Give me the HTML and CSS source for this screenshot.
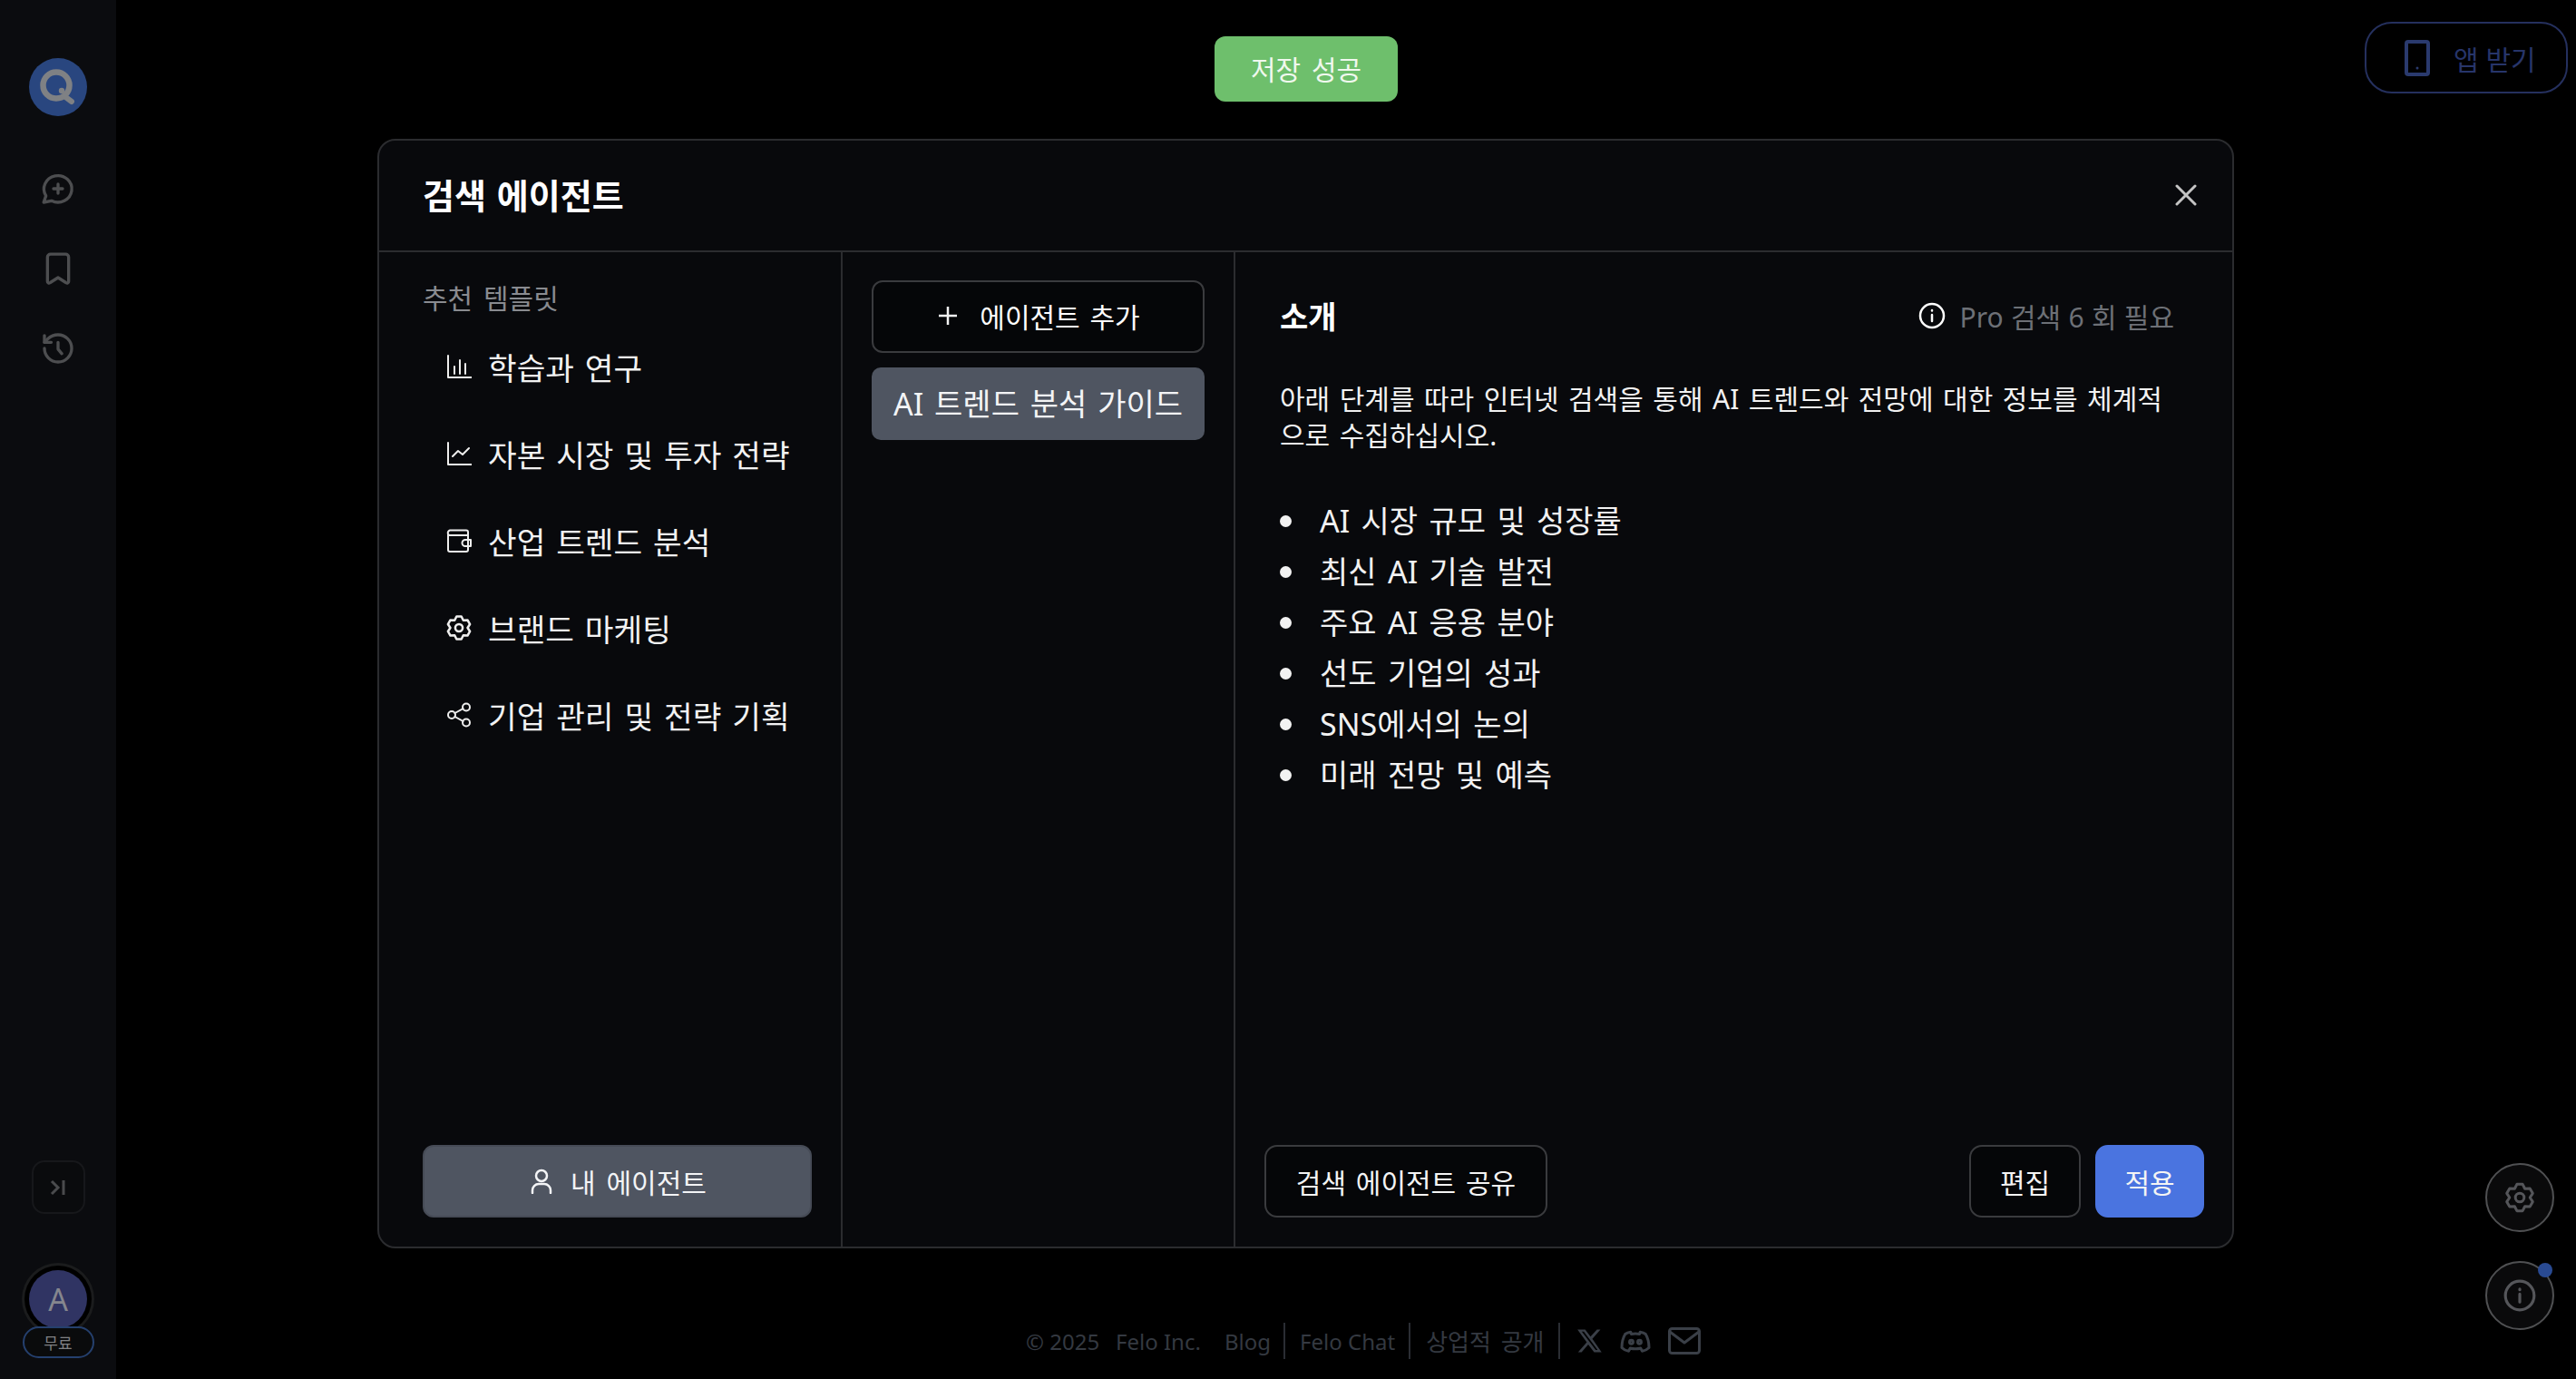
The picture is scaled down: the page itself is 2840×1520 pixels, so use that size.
FILE: index.html
```html
<!DOCTYPE html>
<html lang="ko">
<head>
<meta charset="utf-8">
<title>검색 에이전트</title>
<link rel="stylesheet" href="styles.css">
</head>
<body>
<div class="page">
  <aside class="sidebar">
    <div class="logo">
      <svg viewBox="0 0 64 64" width="64" height="64"><circle cx="32" cy="32" r="32" fill="#29467f"/><circle cx="30" cy="30" r="14.500" fill="none" stroke="#7f8184" stroke-width="6.500"/><circle cx="36" cy="36" r="3.200" fill="#7f8184"/><path d="M39 42l8 6" stroke="#7f8184" stroke-width="6" stroke-linecap="round"/></svg>
    </div>
    <nav class="side-nav">
      <svg class="side-icon" viewBox="0 0 24 24"><path d="M2.500 21l1.500-4.300A9.200 8.800 0 1 1 7.700 20z"/><path d="M9 12h6M12 9v6"/></svg>
      <svg class="side-icon" viewBox="0 0 24 24"><path d="M5 4.500a2 2 0 0 1 2-2h10a2 2 0 0 1 2 2v16c0 1.200-1 1.400-1.800.8L12 18l-5.200 3.300c-.8.600-1.800.4-1.800-.8z"/></svg>
      <svg class="side-icon" viewBox="0 0 24 24"><path d="M3 12a9 9 0 1 0 9-9 9.750 9.750 0 0 0-6.740 2.740L3 8"/><path d="M3 3.500v4.500h4.500"/><path d="M12 8v4.500l2.500 3"/></svg>
    </nav>
    <div class="side-bottom">
      <button class="collapse">
        <svg viewBox="0 0 24 24" width="24" height="24"><path d="M5 5l7 7-7 7M18 4v16"/></svg>
      </button>
      <div class="avatar-wrap">
        <div class="avatar">A</div>
        <div class="plan">무료</div>
      </div>
    </div>
  </aside>

  <main class="main">
    <header class="topbar">
      <a class="app-btn">
        <svg viewBox="0 0 28 40" width="28" height="40"><rect x="2" y="2" width="24" height="36" rx="2" fill="none" stroke="#2a3a6e" stroke-width="4"/><circle cx="14" cy="31" r="1.500" fill="#2a3a6e"/></svg>
        <span>앱 받기</span>
      </a>
    </header>
    <footer class="footer">
      <span class="copy">© 2025</span>
      <span class="inc">Felo Inc.</span>
      <a class="foot-link first">Blog</a>
      <a class="foot-link">Felo Chat</a>
      <a class="foot-link ko">상업적 공개</a>
      <span class="foot-icons">
        <svg viewBox="0 0 24 24" width="30" height="30" class="fill"><path d="M18.900 2H22l-7.200 8.200L23 22h-6.600l-5.200-6.800L5.300 22H2.200l7.700-8.800L1.700 2h6.800l4.700 6.200zM17.800 20h1.700L7.300 3.800H5.500z"/></svg>
        <svg viewBox="0 0 24 24" width="36" height="36" class="line"><path d="M8.500 5.500C7 5.700 5.500 6.200 4.500 7 3 9.500 2 13 2 17c1.500 1.500 3.300 2.300 5 2.500l1.200-2.200c2.500.7 5.100.7 7.600 0L17 19.500c1.700-.2 3.500-1 5-2.500 0-4-1-7.500-2.500-10-1-.8-2.500-1.300-4-1.500L15 7c-2-.4-4-.4-6 0z"/><circle cx="9" cy="12.800" r="1.300"/><circle cx="15" cy="12.800" r="1.300"/></svg>
        <svg viewBox="0 0 36 30" width="36" height="30" class="line wide"><rect x="1.500" y="1.500" width="33" height="27" rx="3"/><path d="M2 5l16 12L34 5"/></svg>
      </span>
    </footer>
  </main>
</div>

<div class="float-btns">
  <button class="round">
    <svg viewBox="0 0 24 24" width="36" height="36"><path d="M9.900 2.200h4.200l1.650 3.300 3.680-.190 2.080 3.600L19.500 12l2.010 3.090-2.080 3.600-3.680-.190-1.650 3.280H9.900L8.250 18.500l-3.680.190-2.080-3.600L4.500 12 2.490 8.910l2.080-3.600 3.680.190z" stroke-linejoin="round"/><circle cx="12" cy="12" r="3.200"/></svg>
  </button>
  <button class="round">
    <svg viewBox="0 0 24 24" width="38" height="38"><circle cx="12" cy="12" r="10"/><path d="M12 11v5.500M12 7.500v.500"/></svg>
    <i class="dot"></i>
  </button>
</div>

<div class="toast">저장 성공</div>

<section class="modal">
  <header class="modal-head">
    <h2>검색 에이전트</h2>
    <svg class="close" viewBox="0 0 24 24" width="24" height="24"><path d="M2 2l20 20M22 2L2 22"/></svg>
  </header>
  <div class="modal-body">
    <div class="col-left">
      <p class="col-label">추천 템플릿</p>
      <ul class="tpl-list">
        <li class="tpl"><svg viewBox="0 0 28 28" class="tpl-icon"><path d="M2 2v24h26M9 14v8M15 7v15M21 11v11"/></svg>학습과 연구</li>
        <li class="tpl"><svg viewBox="0 0 28 28" class="tpl-icon"><path d="M2 2v24h26M7 17l6-6 5 4 7-7"/></svg>자본 시장 및 투자 전략</li>
        <li class="tpl"><svg viewBox="0 0 28 28" class="tpl-icon"><path d="M4 2.500h18a2 2 0 0 1 2 2V9M2 6.500a3 3 0 0 1 2-4M2 6.500V24a2 2 0 0 0 2 2h18a2 2 0 0 0 2-2V8H4a2 2 0 0 1-2-1.500M27 13h-6a3.500 3.500 0 0 0 0 7h6z"/></svg>산업 트렌드 분석</li>
        <li class="tpl"><svg viewBox="1 1 22 22" class="tpl-icon"><path d="M9.900 2.200h4.200l1.650 3.300 3.680-.190 2.080 3.600L19.500 12l2.010 3.090-2.080 3.600-3.680-.190-1.650 3.280H9.900L8.250 18.500l-3.680.190-2.080-3.600L4.500 12 2.490 8.910l2.080-3.600 3.680.190z"/><circle cx="12" cy="12" r="3.200"/></svg>브랜드 마케팅</li>
        <li class="tpl"><svg viewBox="0 0 28 28" class="tpl-icon"><circle cx="6" cy="14" r="4"/><circle cx="22" cy="5.500" r="4"/><circle cx="22" cy="22.500" r="4"/><path d="M9.500 12l9-5M9.500 16l9 5"/></svg>기업 관리 및 전략 기획</li>
      </ul>
      <button class="mine">
        <svg viewBox="0 0 24 28" width="24" height="28"><circle cx="12" cy="8" r="6"/><path d="M2 27v-3a7 7 0 0 1 7-7h6a7 7 0 0 1 7 7v3"/></svg>
        내 에이전트
      </button>
    </div>
    <div class="col-mid">
      <button class="add">
        <svg viewBox="0 0 22 22" width="22" height="22"><path d="M11 1v20M1 11h20"/></svg>
        에이전트 추가
      </button>
      <div class="agent">AI 트렌드 분석 가이드</div>
    </div>
    <div class="col-right">
      <div class="intro">
        <div class="intro-head">
          <h3>소개</h3>
          <span class="need">
            <svg viewBox="0 0 30 30" width="30" height="30"><circle cx="15" cy="15" r="13"/><path d="M15 14v7M15 9v.500"/></svg>
            Pro 검색 6 회 필요
          </span>
        </div>
        <p class="desc">아래 단계를 따라 인터넷 검색을 통해 AI 트렌드와 전망에 대한 정보를 체계적<br>으로 수집하십시오.</p>
        <ul class="steps">
          <li>AI 시장 규모 및 성장률</li>
          <li>최신 AI 기술 발전</li>
          <li>주요 AI 응용 분야</li>
          <li>선도 기업의 성과</li>
          <li>SNS에서의 논의</li>
          <li>미래 전망 및 예측</li>
        </ul>
      </div>
      <div class="actions">
        <button class="btn">검색 에이전트 공유</button>
        <span class="grow"></span>
        <button class="btn edit">편집</button>
        <button class="btn apply">적용</button>
      </div>
    </div>
  </div>
</section>
</body>
</html>
```
FILE: styles.css
```css
* { box-sizing: border-box; }
html, body { margin: 0; height: 100%; }
body {
  background: #000;
  color: #fff;
  font-family: "Noto Sans", "Noto Sans CJK KR", sans-serif;
  overflow: hidden;
}
button { font: inherit; color: inherit; cursor: pointer; }
h2, h3, p, ul { margin: 0; padding: 0; }
ul { list-style: none; }

.page { display: flex; width: 2840px; height: 1520px; }

.sidebar {
  width: 128px;
  flex: none;
  background: #0b0c0f;
  display: flex;
  flex-direction: column;
  align-items: center;
  padding-top: 64px;
}
.logo { height: 64px; }
.logo svg { display: block; }
.side-nav { display: flex; flex-direction: column; gap: 48px; margin-top: 60px; }
.side-icon {
  width: 40px; height: 40px; display: block;
  fill: none; stroke: #4d4e50; stroke-width: 2; stroke-linecap: round; stroke-linejoin: round;
}
.side-bottom { margin-top: auto; display: flex; flex-direction: column; align-items: center; padding-bottom: 23px; }
.collapse {
  width: 59px; height: 59px; padding: 0;
  background: #0a0b0d;
  border: 2px solid #17181b;
  border-radius: 14px;
  display: flex; align-items: center; justify-content: center;
  margin-bottom: 62px;
}
.collapse svg { fill: none; stroke: #4a4b4d; stroke-width: 3; }
.avatar-wrap { display: flex; flex-direction: column; align-items: center; }
.avatar {
  width: 64px; height: 64px;
  border-radius: 50%;
  background: #303463;
  box-shadow: 0 0 0 5px #000, 0 0 0 8px #1b1c1d;
  color: #85868e;
  font-size: 34px;
  display: flex; align-items: center; justify-content: center;
}
.plan {
  width: 79px; height: 35px;
  margin-top: -2px;
  position: relative;
  border: 2px solid #25406e;
  border-radius: 18px;
  background: #0a0b0c;
  color: #808184;
  font-size: 17px;
  display: flex; align-items: center; justify-content: center;
}

.main { flex: 1; display: flex; flex-direction: column; }
.topbar { display: flex; justify-content: flex-end; padding: 24px 9px 0 0; }
.app-btn {
  width: 224px; height: 79px;
  border: 2px solid #25305e;
  border-radius: 30px;
  color: #27356a;
  font-size: 30px;
  display: flex; align-items: center; gap: 26px;
  padding-left: 42px;
}
.footer {
  margin-top: auto;
  height: 80px;
  padding: 0 0 4px 1003px;
  color: #343941;
  font-size: 24px;
  display: flex; align-items: center;
}
.copy { width: 99px; }
.inc { width: 120px; }
.foot-link {
  height: 40px; display: flex; align-items: center;
  padding: 0 15px 0 16px;
  border-left: 2px solid #2a2d33;
}
.foot-link.first { border-left: 0; padding-left: 0; padding-right: 14px; }
.foot-link.ko { font-size: 26px; word-spacing: 4px; padding: 0 15px 0 17px; }
.foot-icons {
  height: 40px; display: flex; align-items: center; gap: 18px;
  padding-left: 17px;
  border-left: 2px solid #2a2d33;
}
.foot-icons .fill { fill: #3a3f47; }
.foot-icons .line { fill: none; stroke: #3a3f47; stroke-width: 2; stroke-linejoin: round; }
.foot-icons .wide { stroke-width: 3; }

.float-btns {
  position: absolute;
  left: 2740px; top: 1282px;
  display: flex; flex-direction: column; gap: 32px;
}
.round {
  position: relative;
  width: 76px; height: 76px; padding: 0;
  border-radius: 50%;
  border: 2px solid #4f5052;
  background: #0a0a0b;
  display: flex; align-items: center; justify-content: center;
}
.round svg { fill: none; stroke: #55565a; stroke-width: 2; stroke-linecap: round; }
.dot {
  position: absolute; right: 0; top: 0;
  width: 16px; height: 16px; border-radius: 50%;
  background: #294a92;
}

.toast {
  position: absolute;
  left: 1339px; top: 40px;
  width: 202px; height: 72px;
  padding-bottom: 2px;
  background: #6ebf6c;
  border-radius: 12px;
  font-size: 30px;
  word-spacing: 4px;
  color: #f0f8ee;
  display: flex; align-items: center; justify-content: center;
}

.modal {
  position: absolute;
  left: 416px; top: 153px;
  width: 2047px; height: 1223px;
  background: #08090c;
  border: 2px solid #2b2c2f;
  border-radius: 20px;
  display: flex; flex-direction: column;
}
.modal-head {
  height: 123px;
  flex: none;
  border-bottom: 2px solid #2b2c2f;
  display: flex; align-items: center; justify-content: space-between;
  padding: 0 39px 2px 48px;
}
.modal-head h2 { font-size: 38px; font-weight: 700; line-height: 1; word-spacing: 2px; }
.close { fill: none; stroke: #c4c4c4; stroke-width: 3; stroke-linecap: round; }
.modal-body { flex: 1; display: flex; min-height: 0; }

.col-left {
  width: 511px; flex: none;
  border-right: 2px solid #2b2c2f;
  padding: 31px 32px 32px 48px;
  display: flex; flex-direction: column;
}
.col-label { font-size: 30px; line-height: 40px; color: #898b90; word-spacing: 4px; }
.tpl-list { margin-top: 7px; }
.tpl {
  height: 96px;
  display: flex; align-items: center; gap: 18px;
  padding-left: 26px;
  font-size: 34.400px;
  word-spacing: 3px;
  white-space: nowrap;
  color: #f2f2f2;
}
.tpl-icon {
  width: 28px; height: 28px; flex: none;
  fill: none; stroke: #eee; stroke-width: 2; stroke-linecap: round; stroke-linejoin: round;
}
.mine {
  margin-top: auto;
  height: 80px;
  padding: 0 0 0 3px;
  background: #4f5561;
  border: 2px solid #464b56;
  border-radius: 12px;
  display: flex; align-items: center; justify-content: center; gap: 20px;
  font-size: 30px;
  word-spacing: 4px;
  color: #f3f4f6;
}
.mine svg { fill: none; stroke: #f3f4f6; stroke-width: 2.500; stroke-linecap: round; }

.col-mid {
  width: 433px; flex: none;
  border-right: 2px solid #2b2c2f;
  padding: 31px 32px;
  display: flex; flex-direction: column; gap: 16px;
}
.add {
  height: 80px;
  padding: 0 0 3px 2px;
  background: #050608;
  border: 2px solid #3a3b3e;
  border-radius: 12px;
  display: flex; align-items: center; justify-content: center; gap: 24px;
  font-size: 30px;
  word-spacing: 3px;
}
.add svg { fill: none; stroke: #f3f3f3; stroke-width: 2.500; }
.agent {
  height: 80px;
  padding-bottom: 3px;
  background: #4f5561;
  border-radius: 10px;
  display: flex; align-items: center; justify-content: center;
  font-size: 34px;
  word-spacing: 3px;
  white-space: nowrap;
  color: #f3f4f6;
}

.col-right {
  flex: 1; min-width: 0;
  display: flex; flex-direction: column;
  padding: 0 31px 32px 32px;
}
.intro { flex: 1; padding: 31px 33px 0 17px; }
.intro-head { height: 80px; display: flex; align-items: center; justify-content: space-between; }
.intro-head h3 { font-size: 34px; font-weight: 700; padding-bottom: 3px; }
.need {
  display: flex; align-items: center; gap: 16px;
  padding-bottom: 2px;
  color: #6d7076;
  font-size: 30px;
  word-spacing: .5px;
  white-space: nowrap;
}
.need svg { fill: none; stroke: #fff; stroke-width: 2.500; stroke-linecap: round; }
.desc { margin-top: 31px; font-size: 30px; line-height: 40px; color: #f2f2f2; word-spacing: 2.700px; white-space: nowrap; }
.steps { margin-top: 46px; }
.steps li {
  position: relative;
  height: 56px;
  padding-left: 44px;
  font-size: 34px;
  line-height: 56px;
  word-spacing: 3.500px;
  color: #f2f2f2;
}
.steps li::before {
  content: "";
  position: absolute; left: 0; top: 22px;
  width: 13px; height: 13px; border-radius: 50%;
  background: #f2f2f2;
}
.actions { height: 80px; flex: none; display: flex; align-items: stretch; gap: 16px; }
.grow { flex: 1; }
.btn {
  padding: 0;
  width: 312px;
  background: #050608;
  border: 2px solid #3a3b3e;
  border-radius: 14px;
  font-size: 30px;
  word-spacing: 3px;
  white-space: nowrap;
  color: #f4f4f4;
}
.edit { width: 123px; }
.apply { width: 120px; background: #4a74e0; border-color: #4a74e0; }
```
